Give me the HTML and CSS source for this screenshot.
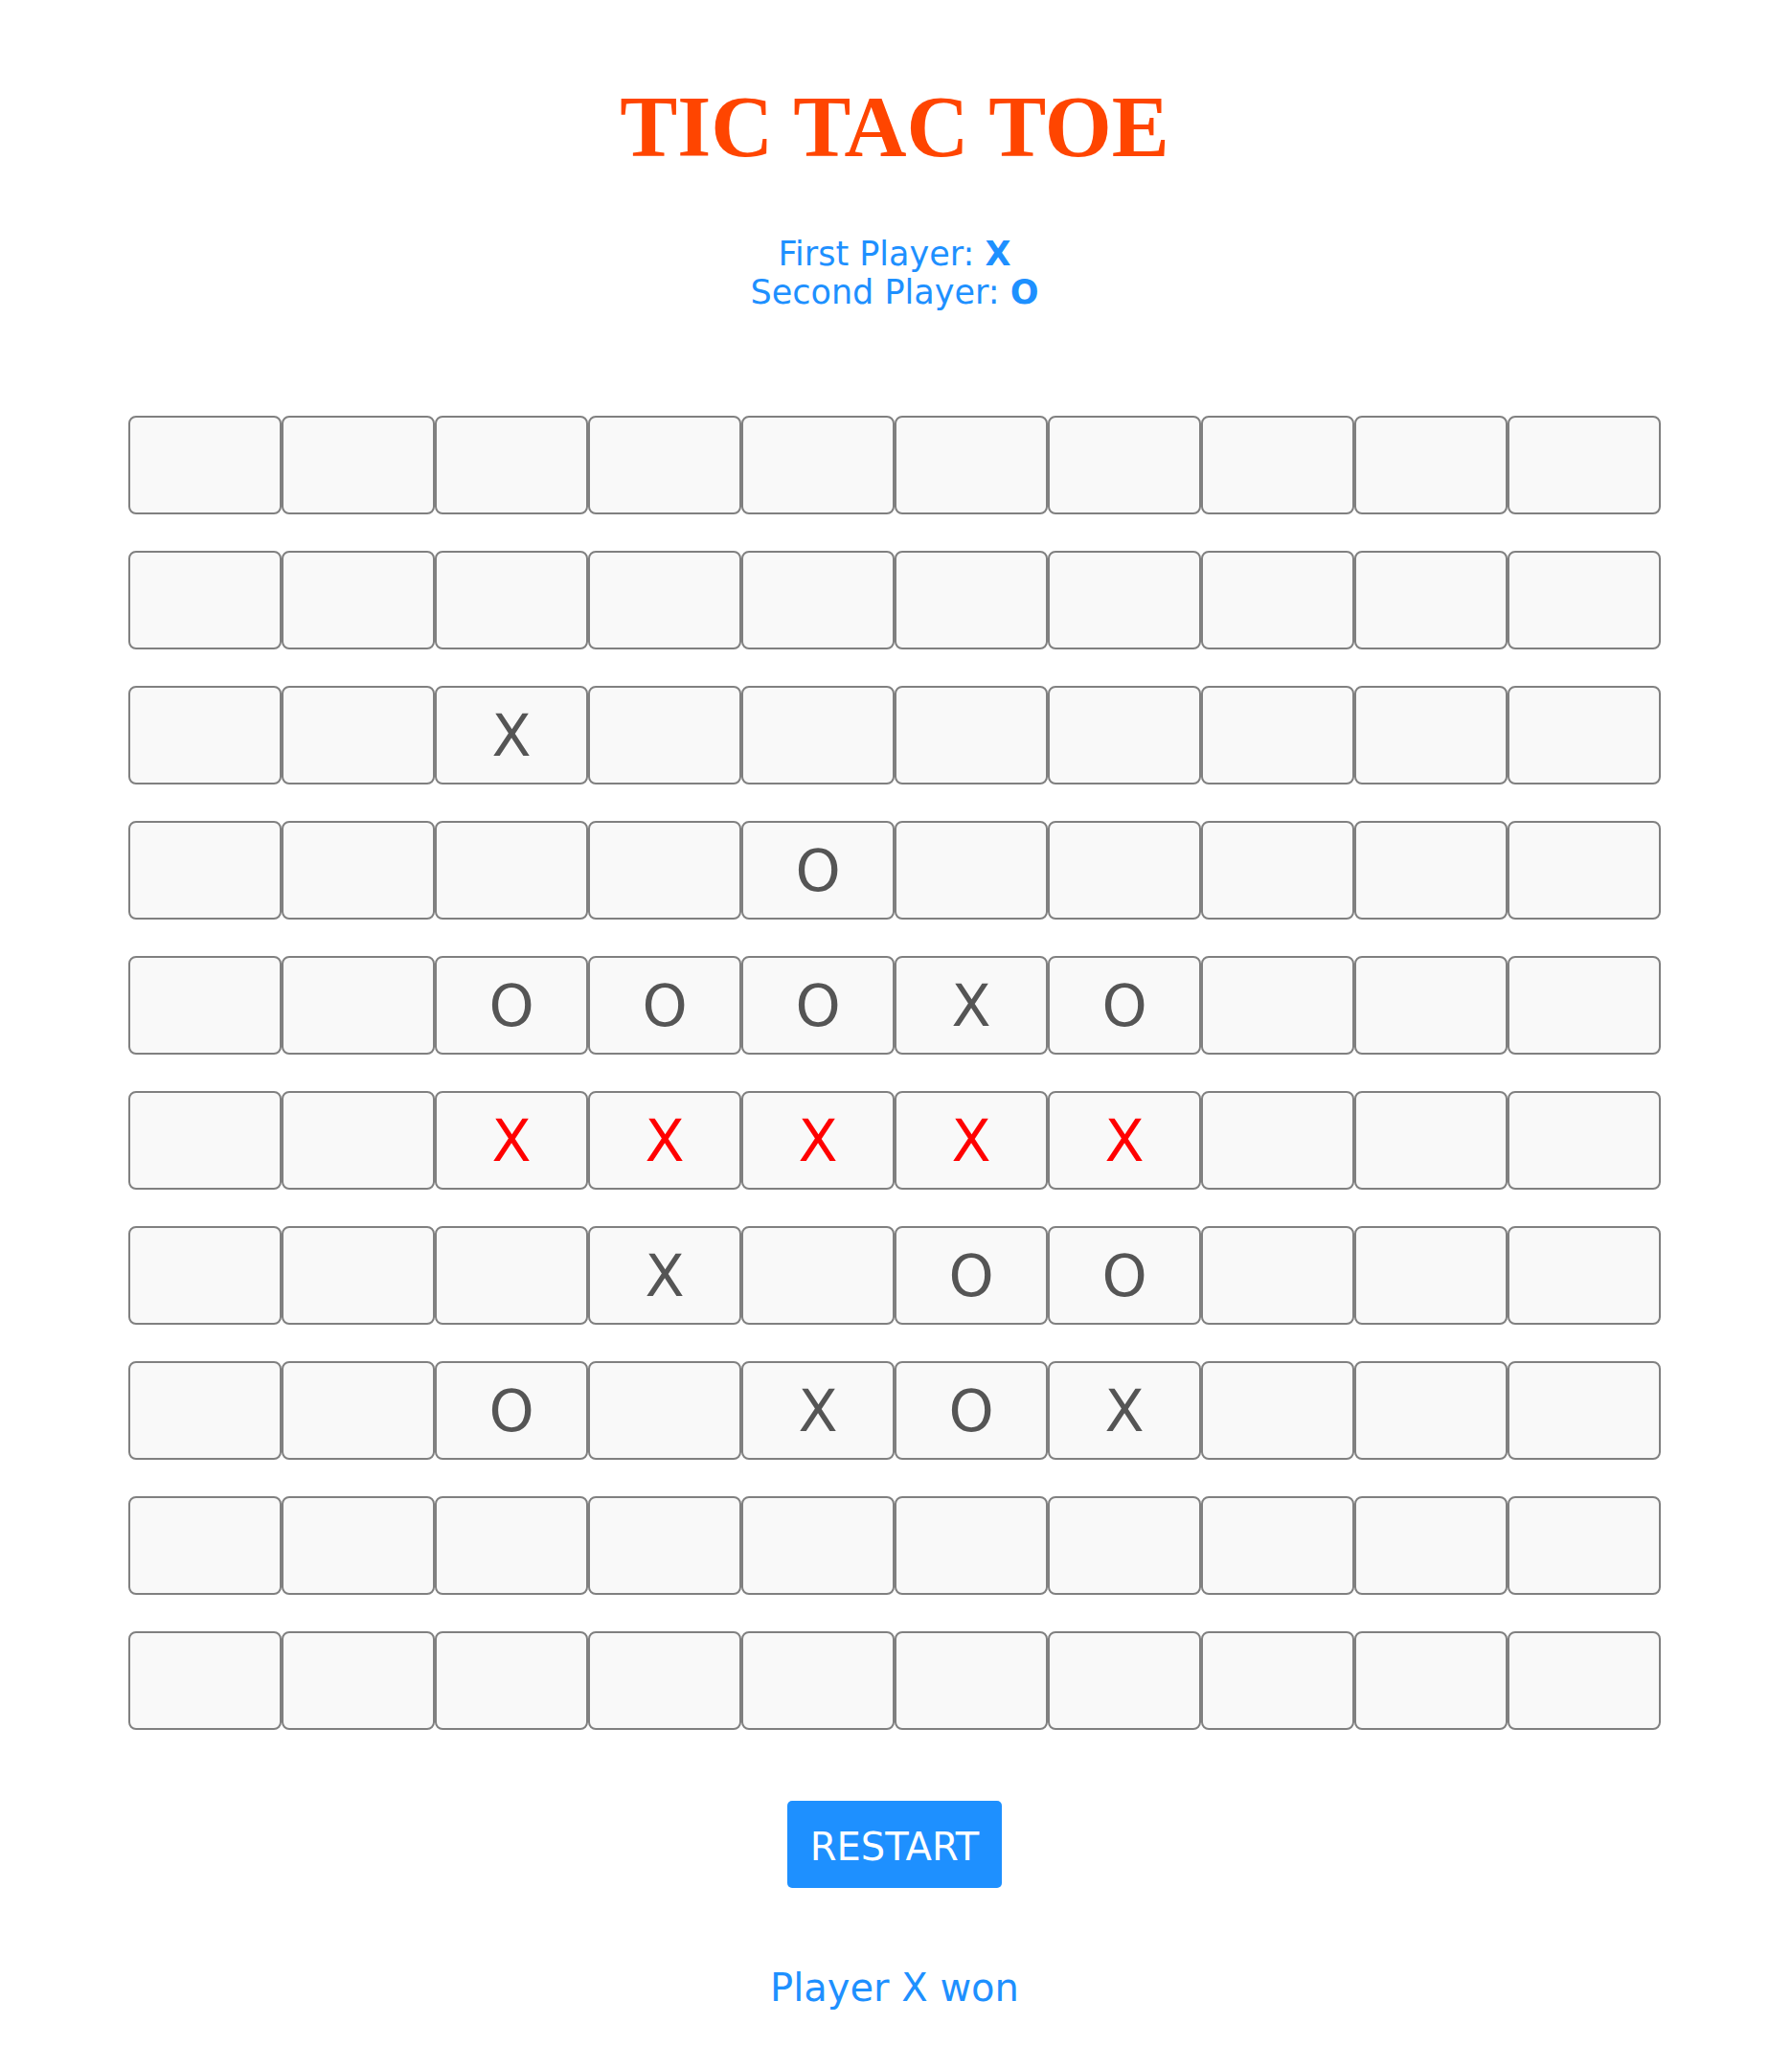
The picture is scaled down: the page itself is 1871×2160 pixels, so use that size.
FILE: index.html
```html
<!DOCTYPE html>
<html lang="en">
<head>
<meta charset="utf-8">
<title>Tic Tac Toe</title>
<link rel="stylesheet" href="styles.css">
</head>
<body>
<main class="game">
  <h1 class="title">TIC TAC TOE</h1>
  <div class="players">
    <div class="player">First Player: <b>X</b></div>
    <div class="player">Second Player: <b>O</b></div>
  </div>
  <div class="board">
    <div class="cell"></div><div class="cell"></div><div class="cell"></div><div class="cell"></div><div class="cell"></div><div class="cell"></div><div class="cell"></div><div class="cell"></div><div class="cell"></div><div class="cell"></div>
    <div class="cell"></div><div class="cell"></div><div class="cell"></div><div class="cell"></div><div class="cell"></div><div class="cell"></div><div class="cell"></div><div class="cell"></div><div class="cell"></div><div class="cell"></div>
    <div class="cell"></div><div class="cell"></div><div class="cell">X</div><div class="cell"></div><div class="cell"></div><div class="cell"></div><div class="cell"></div><div class="cell"></div><div class="cell"></div><div class="cell"></div>
    <div class="cell"></div><div class="cell"></div><div class="cell"></div><div class="cell"></div><div class="cell">O</div><div class="cell"></div><div class="cell"></div><div class="cell"></div><div class="cell"></div><div class="cell"></div>
    <div class="cell"></div><div class="cell"></div><div class="cell">O</div><div class="cell">O</div><div class="cell">O</div><div class="cell">X</div><div class="cell">O</div><div class="cell"></div><div class="cell"></div><div class="cell"></div>
    <div class="cell"></div><div class="cell"></div><div class="cell win">X</div><div class="cell win">X</div><div class="cell win">X</div><div class="cell win">X</div><div class="cell win">X</div><div class="cell"></div><div class="cell"></div><div class="cell"></div>
    <div class="cell"></div><div class="cell"></div><div class="cell"></div><div class="cell">X</div><div class="cell"></div><div class="cell">O</div><div class="cell">O</div><div class="cell"></div><div class="cell"></div><div class="cell"></div>
    <div class="cell"></div><div class="cell"></div><div class="cell">O</div><div class="cell"></div><div class="cell">X</div><div class="cell">O</div><div class="cell">X</div><div class="cell"></div><div class="cell"></div><div class="cell"></div>
    <div class="cell"></div><div class="cell"></div><div class="cell"></div><div class="cell"></div><div class="cell"></div><div class="cell"></div><div class="cell"></div><div class="cell"></div><div class="cell"></div><div class="cell"></div>
    <div class="cell"></div><div class="cell"></div><div class="cell"></div><div class="cell"></div><div class="cell"></div><div class="cell"></div><div class="cell"></div><div class="cell"></div><div class="cell"></div><div class="cell"></div>
  </div>
  <button class="restart" type="button">RESTART</button>
  <p class="status">Player X won</p>
</main>
</body>
</html>
```

FILE: styles.css
```css
html, body {
  margin: 0;
  padding: 0;
  background: #ffffff;
}

.game {
  display: flex;
  flex-direction: column;
  align-items: center;
  padding-top: 81px;
  padding-right: 3px;
  font-family: "DejaVu Sans", Verdana, sans-serif;
}

.title {
  margin: 0;
  font-family: "Liberation Serif", "Times New Roman", serif;
  font-weight: bold;
  font-size: 90px;
  line-height: normal;
  color: #ff4500;
}

.players {
  margin-top: 61px;
  display: flex;
  flex-direction: column;
  align-items: center;
  color: #1e90ff;
  font-size: 35px;
  line-height: 40px;
}

.player b {
  font-weight: bold;
}

.board {
  margin-top: 109px;
  display: grid;
  grid-template-columns: repeat(10, 160px);
  grid-auto-rows: 103px;
  row-gap: 38px;
}

.cell {
  box-sizing: border-box;
  border: 2px solid #808080;
  border-radius: 8px;
  background: #f9f9f9;
  display: flex;
  align-items: center;
  justify-content: center;
  font-size: 60px;
  color: #555555;
}

.cell.win {
  color: #ff0000;
}

.restart {
  margin-top: 74px;
  font-family: "DejaVu Sans", Verdana, sans-serif;
  font-size: 40px;
  line-height: 47px;
  padding: 25px 24px 19px;
  border: none;
  border-radius: 5px;
  background: #1e90ff;
  color: #ffffff;
}

.status {
  margin: 81px 0 0;
  font-size: 40px;
  line-height: normal;
  color: #1e90ff;
}
```
